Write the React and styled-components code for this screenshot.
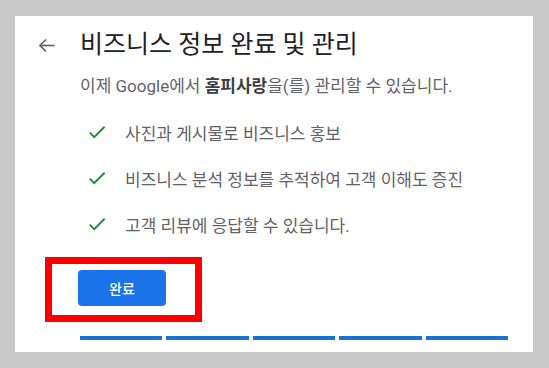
import React from 'react';
import styled, { createGlobalStyle } from 'styled-components';

const GlobalStyle = createGlobalStyle`
  html, body {
    margin: 0;
    padding: 0;
    background: #c9c9c9;
  }
  body {
    font-family: Roboto, "Noto Sans CJK KR", sans-serif;
  }
`;

const Page = styled.div`
  width: 549px;
  height: 368px;
  box-sizing: border-box;
  padding: 16px 16px 16px 15px;
`;

const Card = styled.section`
  height: 336px;
  box-sizing: border-box;
  background: #fff;
  padding: 14px 0 12px 0;
  display: flex;
  flex-direction: column;
`;

const Header = styled.div`
  display: flex;
  align-items: center;
  padding-left: 22px;
  height: 30px;
`;

const BackButton = styled.div`
  width: 18px;
  height: 18px;
  display: flex;
  align-items: center;
  justify-content: center;
  margin-right: 25px;
  color: #5f6368;
`;

const Title = styled.h1`
  margin: 0;
  font-size: 25px;
  line-height: 30px;
  font-weight: 400;
  color: #202124;
`;

const Body = styled.div`
  padding-left: 65px;
  display: flex;
  flex-direction: column;
`;

const Subtitle = styled.p`
  margin: 14px 0 0 0;
  font-size: 17px;
  line-height: 24px;
  color: #5f6368;

  b {
    font-weight: 700;
    color: #3c4043;
  }
`;

const List = styled.ul`
  list-style: none;
  margin: 22px 0 0 0;
  padding: 0;
  display: flex;
  flex-direction: column;
  gap: 22px;
`;

const Item = styled.li`
  display: flex;
  align-items: center;
  height: 24px;
  font-size: 17px;
  color: #5f6368;
`;

const Check = styled.svg`
  width: 22px;
  height: 22px;
  margin-left: 6px;
  margin-right: 17px;
  fill: #1e8e3e;
  flex-shrink: 0;
`;

const Highlight = styled.div`
  margin: 21px 0 0 30px;
  width: 157px;
  height: 65px;
  box-sizing: border-box;
  border: 7px solid #ff0000;
  padding: 6px 0 0 26px;
`;

const PrimaryButton = styled.button`
  width: 88px;
  height: 36px;
  border: none;
  border-radius: 4px;
  background: #1a73e8;
  color: #fff;
  font-family: Roboto, "Noto Sans CJK KR", sans-serif;
  font-size: 14px;
  font-weight: 500;
  cursor: pointer;
`;

const Progress = styled.div`
  margin: 14px 0 0 65px;
  width: 428px;
  display: flex;
  gap: 4px;
`;

const Segment = styled.div`
  flex: 1;
  height: 4px;
  background: ${p => (p.$done ? '#1a6fd9' : '#dadce0')};
`;

const items = [
  '사진과 게시물로 비즈니스 홍보',
  '비즈니스 분석 정보를 추적하여 고객 이해도 증진',
  '고객 리뷰에 응답할 수 있습니다.',
];

export default function App() {
  return (
    <>
      <GlobalStyle />
      <Page>
        <Card>
          <Header>
            <BackButton>
              <svg width="17" height="15" viewBox="0 0 17 15" fill="none" stroke="currentColor" strokeWidth="1.7">
                <path d="M16.5 7.5H2" />
                <path d="M8 1.5L2 7.5l6 6" />
              </svg>
            </BackButton>
            <Title>비즈니스 정보 완료 및 관리</Title>
          </Header>
          <Body>
            <Subtitle>
              이제 Google에서 <b>홈피사랑</b>을(를) 관리할 수 있습니다.
            </Subtitle>
            <List>
              {items.map(text => (
                <Item key={text}>
                  <Check viewBox="0 0 24 24">
                    <path d="M9 16.17L4.83 12l-1.42 1.41L9 19 21 7l-1.41-1.41z" />
                  </Check>
                  {text}
                </Item>
              ))}
            </List>
          </Body>
          <Highlight>
            <PrimaryButton>완료</PrimaryButton>
          </Highlight>
          <Progress>
            {[0, 1, 2, 3, 4].map(i => (
              <Segment key={i} $done />
            ))}
          </Progress>
        </Card>
      </Page>
    </>
  );
}
